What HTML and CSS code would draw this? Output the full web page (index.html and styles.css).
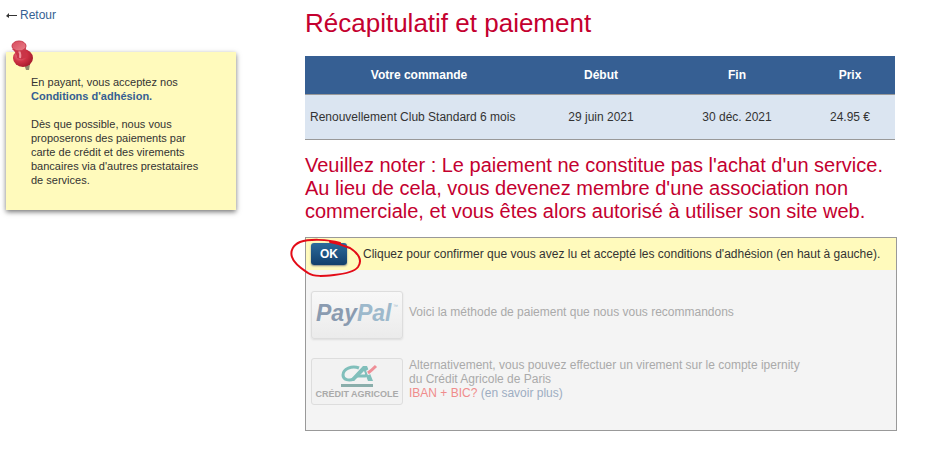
FILE: index.html
```html
<!DOCTYPE html>
<html lang="fr">
  <head>
    <meta charset="utf-8">
    <title>Récapitulatif et paiement</title>
    <link rel="stylesheet" href="styles.css">
  </head>
  <body>
    <div class="page">

      <div class="sidebar">
        <div class="back">
          <svg class="arrow" width="11" height="7" viewBox="0 0 11 7"><path d="M3 1 L0 4 L3 6 Z" fill="#333"/><path d="M1 3.5 H11" fill="none" stroke="#333"/></svg>
          <a href="#">Retour</a>
        </div>

        <div class="note">
          <svg class="pin" width="26" height="32" viewBox="0 0 26 32">
            <defs>
              <radialGradient id="pinBody" cx="0.35" cy="0.35" r="0.7">
                <stop offset="0" stop-color="#ee8791"/>
                <stop offset="0.5" stop-color="#cf3245"/>
                <stop offset="1" stop-color="#a51b2c"/>
              </radialGradient>
              <linearGradient id="pinTop" x1="0" y1="0" x2="1" y2="1">
                <stop offset="0" stop-color="#d84a5c"/>
                <stop offset="1" stop-color="#e8808a"/>
              </linearGradient>
            </defs>
            <path d="M15 24 L21 24 L20 30 L17 30 Z" fill="#8f8a6c"/>
            <ellipse cx="14" cy="18" rx="10" ry="9" fill="url(#pinBody)"/>
            <path d="M3 9 L17 8 Q16 13 19 16 Q14 21 8 18 Q8 13 3 9 Z" fill="#c93447"/>
            <path d="M10 11 Q12 14 11 18" stroke="#ee949d" stroke-width="2" fill="none"/>
            <ellipse cx="10" cy="6" rx="7" ry="5" fill="url(#pinTop)" stroke="#c93a4c" stroke-width="1"/>
          </svg>
          <p>En payant, vous acceptez nos<br><a href="#">Conditions d'adhésion.</a></p>
          <p>Dès que possible, nous vous proposerons des paiements par carte de crédit et des virements bancaires via d'autres prestataires de services.</p>
        </div>
      </div>

      <div class="main">
        <h1>Récapitulatif et paiement</h1>

        <table class="order">
          <thead>
            <tr>
              <th>Votre commande</th>
              <th class="col-date">Début</th>
              <th class="col-date">Fin</th>
              <th class="col-price">Prix</th>
            </tr>
          </thead>
          <tbody>
            <tr>
              <td class="item">Renouvellement Club Standard 6 mois</td>
              <td>29 juin 2021</td>
              <td>30 déc. 2021</td>
              <td>24.95 €</td>
            </tr>
          </tbody>
        </table>

        <h2>Veuillez noter : Le paiement ne constitue pas l'achat d'un service. Au lieu de cela, vous devenez membre d'une association non commerciale, et vous êtes alors autorisé à utiliser son site web.</h2>

        <div class="payment">
          <div class="confirm">
            <button type="button" class="ok">OK</button>
            <span>Cliquez pour confirmer que vous avez lu et accepté les conditions d'adhésion (en haut à gauche).</span>
            <!-- hand drawn circle around the button -->
            <svg class="circle" width="76" height="44" viewBox="0 0 76 44">
              <path d="M51 5 C38 1 20 1 11 4 C4 7 1 13 3 19 C5 26 13 31 19 35 C25 39 35 38 45 37 C55 36 65 34 69 29 C74 22 69 15 61 10 C54 7 47 5 41 4" fill="none" stroke="#e30b17" stroke-width="2" stroke-linecap="round"/>
            </svg>
          </div>

          <div class="method">
            <button type="button" class="logo" aria-label="PayPal">
              <svg width="90" height="45" viewBox="0 0 90 45">
                <text class="paypal" x="4" y="28"><tspan fill="#8a9bb0">Pay</tspan><tspan fill="#9db9cc">Pal</tspan></text>
                <text class="tm" x="81" y="15">™</text>
              </svg>
            </button>
            <span class="hint">Voici la méthode de paiement que nous vous recommandons</span>
          </div>

          <div class="method transfer">
            <button type="button" class="logo flat" aria-label="Crédit Agricole">
              <svg width="90" height="45" viewBox="0 0 90 45">
                <path d="M47 9 C40 6 31 10 31 16 C31 21 37 22 42 20" fill="none" stroke="#80bfbb" stroke-width="3"/>
                <path d="M37 22 L42 22 L52 12 L56 22 L61 22 L55 7 L51 7 Z" fill="#80bfbb"/>
                <path d="M44 17 L53 17 L56 15" fill="none" stroke="#80bfbb" stroke-width="3"/>
                <path d="M55 14 Q60 12 64 7" fill="none" stroke="#f2f2f2" stroke-width="5"/>
                <path d="M56 14 Q60 11 64 7" fill="none" stroke="#ee8f97" stroke-width="3"/>
                <rect x="29" y="25" width="32" height="3" fill="#8aaeab"/>
                <text class="agricole" x="45" y="38" text-anchor="middle">CRÉDIT AGRICOLE</text>
              </svg>
            </button>
            <span>Alternativement, vous pouvez effectuer un virement sur le compte ipernity<br>
              du Crédit Agricole de Paris<br>
              <em>IBAN + BIC?</em> <a href="#">(en savoir plus)</a></span>
          </div>
        </div>
      </div>

    </div>
  </body>
</html>
```
FILE: styles.css
```css
body {
    margin: 0;
    background: #fff;
    color: #333;
    font-family: "Liberation Sans", Arial, sans-serif;
    font-size: 12px;
    line-height: 14px;
}

a {
    color: #355f93;
    text-decoration: none;
}

.page {
    display: flex;
    align-items: flex-start;
    gap: 69px;
    padding: 8px 37px 32px 6px;
}

.sidebar {
    flex: none;
    width: 230px;
}

.back {
    display: flex;
    align-items: center;
    gap: 3px;
}

.note {
    position: relative;
    margin-top: 30px;
    padding: 23px 24px 9px 25px;
    background: #fffabc;
    box-shadow: 0 2px 5px #777;
    font-size: 11px;
}

.note p {
    margin: 0 0 14px;
}

.note a {
    font-weight: bold;
}

.pin {
    position: absolute;
    left: 3px;
    top: -12px;
}

.main {
    flex: 1;
}

h1 {
    margin: 0 0 18px;
    color: #c4002f;
    font-size: 26px;
    font-weight: normal;
    line-height: 30px;
}

h2 {
    margin: 14px 0;
    color: #c4002f;
    font-size: 20px;
    font-weight: normal;
    line-height: 23px;
}

.order {
    width: calc(100% - 2px);
    table-layout: fixed;
    border-collapse: collapse;
    text-align: center;
}

.order th {
    height: 38px;
    padding: 0;
    background: #365f93;
    border-bottom: 1px solid #999;
    color: #fff;
}

.order td {
    height: 44px;
    padding: 0;
    background: #dbe5f1;
    border-bottom: 1px solid #999;
}

.order .item {
    padding-left: 5px;
    text-align: left;
}

.col-date {
    width: 136px;
}

.col-price {
    width: 90px;
}

.payment {
    border: 1px solid #999;
    background: #f4f4f4;
    padding-bottom: 25px;
}

.confirm {
    position: relative;
    display: flex;
    align-items: center;
    gap: 16px;
    height: 32px;
    padding-left: 5px;
    background: #fffabc;
}

.ok {
    width: 36px;
    height: 22px;
    padding: 0;
    border: 0;
    border-radius: 3px;
    background: linear-gradient(#2b6a9b, #123f6c);
    box-shadow: 0 1px 2px #888;
    color: #fff;
    font: bold 12px "Liberation Sans", Arial, sans-serif;
}

.circle {
    position: absolute;
    left: -17px;
    top: 0;
}

.method {
    display: flex;
    align-items: center;
    gap: 6px;
    margin-top: 21px;
    padding-left: 5px;
    color: #aaa;
}

.hint {
    padding-bottom: 6px;
}

.transfer {
    align-items: flex-start;
    margin-top: 19px;
}

.method a {
    color: #9dadc2;
}

.method em {
    color: #f08c8c;
    font-style: normal;
}

.logo {
    flex: none;
    box-sizing: border-box;
    width: 92px;
    height: 48px;
    padding: 0;
    border: 1px solid #ddd;
    border-radius: 3px;
    background: linear-gradient(#f8f8f8, #ebebeb);
    box-shadow: 0 1px 2px #ddd;
}

.flat {
    height: 47px;
    background: #f2f2f2;
    box-shadow: none;
}

.logo svg {
    display: block;
}

.paypal {
    font: italic bold 23px "Liberation Sans", sans-serif;
}

.tm {
    font: 5px "Liberation Sans", sans-serif;
    fill: #9db9cc;
}

.agricole {
    font: bold 9px "Liberation Sans", sans-serif;
    fill: #aaa;
}
```
